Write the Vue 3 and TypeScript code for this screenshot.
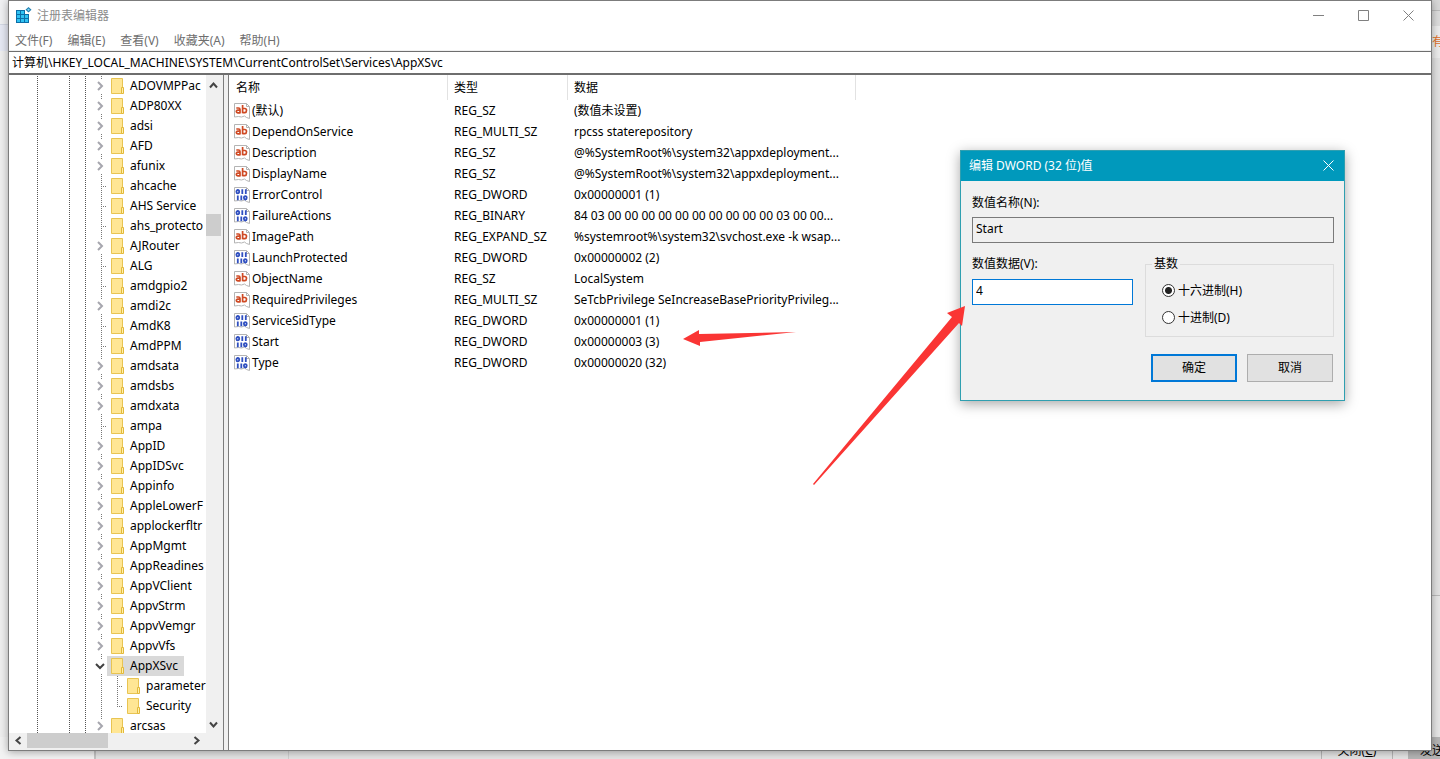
<script setup lang="ts">
import { ref } from 'vue'

type Kind = 'closed' | 'open' | 'leaf' | 'child'
interface Node { name: string; kind: Kind; last?: boolean }
interface Entry { name: string; type: string; data: string; text: boolean }

const menus = ['文件(F)', '编辑(E)', '查看(V)', '收藏夹(A)', '帮助(H)']
const leaves = ['ahcache', 'AHS Service', 'ahs_protecto', 'ALG', 'amdgpio2', 'AmdK8', 'AmdPPM', 'ampa']
const names = [
  'ADOVMPPac', 'ADP80XX', 'adsi', 'AFD', 'afunix', 'ahcache', 'AHS Service', 'ahs_protecto',
  'AJRouter', 'ALG', 'amdgpio2', 'amdi2c', 'AmdK8', 'AmdPPM', 'amdsata', 'amdsbs', 'amdxata', 'ampa',
  'AppID', 'AppIDSvc', 'Appinfo', 'AppleLowerF', 'applockerfltr', 'AppMgmt', 'AppReadines',
  'AppVClient', 'AppvStrm', 'AppvVemgr', 'AppvVfs',
]
const nodes: Node[] = [
  ...names.map((name): Node => ({ name, kind: leaves.includes(name) ? 'leaf' : 'closed' })),
  { name: 'AppXSvc', kind: 'open' },
  { name: 'parameter', kind: 'child' },
  { name: 'Security', kind: 'child', last: true },
  { name: 'arcsas', kind: 'closed' },
]

const entries: Entry[] = [
  { name: '(默认)', type: 'REG_SZ', data: '(数值未设置)', text: true },
  { name: 'DependOnService', type: 'REG_MULTI_SZ', data: 'rpcss staterepository', text: true },
  { name: 'Description', type: 'REG_SZ', data: '@%SystemRoot%\\system32\\appxdeployment...', text: true },
  { name: 'DisplayName', type: 'REG_SZ', data: '@%SystemRoot%\\system32\\appxdeployment...', text: true },
  { name: 'ErrorControl', type: 'REG_DWORD', data: '0x00000001 (1)', text: false },
  { name: 'FailureActions', type: 'REG_BINARY', data: '84 03 00 00 00 00 00 00 00 00 00 00 03 00 00...', text: false },
  { name: 'ImagePath', type: 'REG_EXPAND_SZ', data: '%systemroot%\\system32\\svchost.exe -k wsap...', text: true },
  { name: 'LaunchProtected', type: 'REG_DWORD', data: '0x00000002 (2)', text: false },
  { name: 'ObjectName', type: 'REG_SZ', data: 'LocalSystem', text: true },
  { name: 'RequiredPrivileges', type: 'REG_MULTI_SZ', data: 'SeTcbPrivilege SeIncreaseBasePriorityPrivileg...', text: true },
  { name: 'ServiceSidType', type: 'REG_DWORD', data: '0x00000001 (1)', text: false },
  { name: 'Start', type: 'REG_DWORD', data: '0x00000003 (3)', text: false },
  { name: 'Type', type: 'REG_DWORD', data: '0x00000020 (32)', text: false },
]

const path = ref('计算机\\HKEY_LOCAL_MACHINE\\SYSTEM\\CurrentControlSet\\Services\\AppXSvc')
const valueName = ref('Start')
const valueData = ref('4')
const base = ref('hex')
</script>

<template>
  <div class="desktop">
    <div class="behind">
      <div class="behind-left"></div>
      <div class="behind-right"><span class="hint">有</span></div>
      <div class="behind-bottom">
        <div class="side-pane"></div>
        <button type="button" class="back-btn">关闭(<u>C</u>)</button>
        <button type="button" class="back-btn send">发送</button>
      </div>
    </div>

    <main class="window">
      <header class="titlebar">
        <svg class="app-icon" width="16" height="16" viewBox="0 0 16 16" aria-hidden="true">
          <path d="M0 3h9v4h4v9H0z" fill="#0a6ea8" />
          <path d="M1 4h3v3H1zM5 4h3v3H5zM1 8h3v3H1zM5 8h3v3H5zM9 8h3v3H9zM1 12h3v3H1zM5 12h3v3H5zM9 12h3v3H9z" fill="#2fc2f2" />
          <path d="M12.500 0l3 2.800-3 2.800-3-2.800z" fill="#1f7fb2" />
          <path d="M12.500 1.500l1.400 1.300-1.400 1.300-1.400-1.300z" fill="#7fdcf8" />
        </svg>
        <h1>注册表编辑器</h1>
        <div class="win-controls">
          <button type="button" aria-label="最小化"><svg width="11" height="11" viewBox="0 0 11 11"><path d="M0 5.500h11" /></svg></button>
          <button type="button" aria-label="最大化"><svg width="11" height="11" viewBox="0 0 11 11"><path d="M.5.5h10v10H.5z" /></svg></button>
          <button type="button" aria-label="关闭窗口"><svg width="11" height="11" viewBox="0 0 11 11"><path d="M.5.500l10 10M10.500.500l-10 10" /></svg></button>
        </div>
      </header>

      <nav class="menubar">
        <button v-for="m in menus" :key="m" type="button">{{ m }}</button>
      </nav>

      <input v-model="path" class="address" type="text" aria-label="注册表路径" />

      <div class="panes">
        <section class="tree-pane">
          <div class="tree-row">
            <ul class="tree">
              <li v-for="n in nodes" :key="n.name" :class="[n.kind, { last: n.last }]">
                <span class="guide g1"></span><span class="guide g2"></span><span class="guide g3"></span>
                <span class="branch">
                  <svg v-if="n.kind === 'closed'" class="chev" width="10" height="10" viewBox="0 0 10 10"><path d="M3 1l4 4-4 4" /></svg>
                  <svg v-else-if="n.kind === 'open'" class="chev dark" width="10" height="10" viewBox="0 0 10 10"><path d="M1 3l4 4 4-4" /></svg>
                </span>
                <span v-if="n.kind === 'child'" class="sub"></span>
                <span class="item">
                  <svg class="folder" width="14" height="16" viewBox="0 0 14 16" aria-hidden="true">
                    <path d="M.5.500h11v15H.5z" fill="#ffe694" stroke="#e8c452" />
                    <path d="M10.500 9.500h2v6h-2z" fill="#fff0a8" stroke="#e3b93a" />
                  </svg>
                  <span>{{ n.name }}</span>
                </span>
              </li>
            </ul>
            <div class="vbar">
              <svg class="arrow" width="9" height="9" viewBox="0 0 9 9"><path d="M1 6.500l3.500-4 3.500 4" /></svg>
              <div class="vthumb"></div>
              <svg class="arrow" width="9" height="9" viewBox="0 0 9 9"><path d="M1 2.500l3.500 4 3.500-4" /></svg>
            </div>
          </div>
          <div class="hbar">
            <svg class="arrow" width="9" height="9" viewBox="0 0 9 9"><path d="M6.500 1l-4 3.500 4 3.500" /></svg>
            <div class="hthumb"></div>
            <svg class="arrow" width="9" height="9" viewBox="0 0 9 9"><path d="M2.500 1l4 3.500-4 3.500" /></svg>
          </div>
        </section>

        <section class="list-pane">
          <table>
            <thead>
              <tr><th class="c-name">名称</th><th class="c-type">类型</th><th class="c-data">数据</th></tr>
            </thead>
            <tbody>
              <tr v-for="e in entries" :key="e.name">
                <td>
                  <span class="cell">
                    <svg width="16" height="16" viewBox="0 0 16 16" aria-hidden="true">
                      <path d="M.5.500h12l3 3v12l-3-1-2-1.500-3 1-3-.5-4 .5z" fill="#fff" stroke="#b4b4b4" />
                      <path d="M12.500.500v3h3" fill="none" stroke="#b4b4b4" />
                      <g v-if="e.text" fill="none" stroke="#cf4a24" stroke-width="1.700">
                        <path d="M2.300 5h2.200q1.500 0 1.500 1.500v4M6 7.200h-2.300q-1.400 0-1.400 1.300t1.400 1.300h2.300M8.600 2v8.300M8.600 5.500h2.200q1.700 0 1.700 2t-1.700 2.200h-2.200" />
                      </g>
                      <g v-else fill="none" stroke="#2f4fc0" stroke-width="1.800">
                        <ellipse cx="3.800" cy="4.700" rx="1.400" ry="1.700" />
                        <path d="M8.300 2.300v4.700M11.800 2.300v4.700M3.800 8.500v4.700M7.300 8.500v4.700" />
                        <ellipse cx="11.300" cy="10.800" rx="1.400" ry="1.700" />
                      </g>
                    </svg>
                    {{ e.name }}
                  </span>
                </td>
                <td>{{ e.type }}</td>
                <td>{{ e.data }}</td>
              </tr>
            </tbody>
          </table>
        </section>
      </div>
    </main>

    <form class="dialog" role="dialog" aria-labelledby="dlg-title" @submit.prevent>
      <header class="dlg-head">
        <h2 id="dlg-title">编辑 DWORD (32 位)值</h2>
        <button type="button" aria-label="关闭"><svg width="11" height="11" viewBox="0 0 11 11"><path d="M.5.500l10 10M10.500.500l-10 10" /></svg></button>
      </header>
      <div class="dlg-body">
        <label for="value-name">数值名称(N):</label>
        <input id="value-name" v-model="valueName" class="box" type="text" readonly />
        <div class="dlg-cols">
          <div class="data-col">
            <label for="value-data">数值数据(V):</label>
            <input id="value-data" v-model="valueData" class="box active" type="text" />
          </div>
          <fieldset>
            <legend>基数</legend>
            <label><input v-model="base" type="radio" name="base" value="hex" />十六进制(H)</label>
            <label><input v-model="base" type="radio" name="base" value="dec" />十进制(D)</label>
          </fieldset>
        </div>
        <div class="actions">
          <button type="submit" class="primary">确定</button>
          <button type="button">取消</button>
        </div>
      </div>
    </form>

    <svg class="marks" width="1440" height="759" viewBox="0 0 1440 759" aria-hidden="true">
      <path d="M683 339l16-9v4l97-2-96 10v4z" />
      <path d="M965 306l-18 7 5 4-139 167 1 1 145-162 3 3z" />
    </svg>
  </div>
</template>

<style>
body {
  margin: 0;
}
</style>

<style scoped>
* {
  box-sizing: border-box;
}
.desktop {
  position: relative;
  display: flex;
  height: 100vh;
  padding: 0 8px 8px;
  overflow: hidden;
  background: #e4e4e4;
  font: 12px/20px "Noto Sans", "Noto Sans CJK SC", sans-serif;
  color: #000;
}
button,
input {
  font: inherit;
  color: inherit;
}
svg {
  display: block;
  flex: none;
}
.behind {
  position: absolute;
  inset: 0;
}
.behind-left {
  position: absolute;
  left: 0;
  top: 0;
  width: 8px;
  height: 100%;
  background: linear-gradient(#f0f1f3 24px, #d3d8e4 24px, #d3d8e4 25px, #e6e9f4 25px, #e6e9f4 51px, #efefef 51px);
}
.behind-right {
  position: absolute;
  right: 0;
  top: 0;
  width: 8px;
  height: 100%;
  overflow: hidden;
  padding-top: 32px;
  background: linear-gradient(#d8d8d8 10px, #bcbcbc 10px, #bcbcbc 11px, #dcdcdc 11px, #dcdcdc 26px, #ececec 26px, #ececec 58px, #e2e2e2 58px, #e2e2e2 595px, #bababa 595px, #bababa 596px, #e6e6e6 596px);
}
.hint {
  color: #e0702a;
}
.behind-bottom {
  position: absolute;
  left: 0;
  right: 0;
  bottom: 0;
  height: 22px;
  display: flex;
  gap: 15px;
  background: linear-gradient(90deg, #f3f3f3 94px, #c4c4c4 94px, #c4c4c4 96px, #e4e4e4 96px);
}
.side-pane {
  flex: 1;
  margin-left: 288px;
  margin-right: -15px;
  border-left: 1px solid #cfcfcf;
}
.back-btn {
  width: 72px;
  height: 28px;
  padding: 0;
  border: 1px solid #b5b5b5;
  border-width: 0 1px;
  background: #e4e4e4;
  white-space: nowrap;
}
.send {
  width: 32px;
  padding-left: 12px;
  border: 0;
  background: #b5b5b5;
  text-align: left;
}
.window {
  position: relative;
  flex: 1;
  min-width: 0;
  display: flex;
  flex-direction: column;
  border: 1px solid #7c7c7c;
  background: #fff;
  box-shadow: 0 1px 8px rgba(0, 0, 0, 0.35);
}
.titlebar {
  display: flex;
  align-items: center;
  height: 30px;
  flex: none;
  padding-left: 7px;
}
.app-icon {
  margin-bottom: 2px;
}
h1,
h2 {
  margin: 0;
  font-size: 12px;
  font-weight: 400;
}
h1 {
  flex: 1;
  margin-left: 5px;
  color: #8c8c8c;
}
.win-controls {
  display: flex;
  align-self: flex-start;
}
.win-controls button {
  display: flex;
  align-items: center;
  justify-content: center;
  width: 45px;
  height: 29px;
  padding: 0;
  border: 0;
  background: none;
}
.win-controls path {
  fill: none;
  stroke: #808080;
}
.menubar {
  display: flex;
  height: 20px;
  flex: none;
  gap: 15px;
  padding-left: 6px;
  border-bottom: 1px solid #f0f0f0;
}
.menubar button {
  padding: 0;
  border: 0;
  background: none;
  color: #6e6e6e;
  line-height: 20px;
}
.address {
  height: 24px;
  flex: none;
  padding: 0 3px 2px;
  border: 1px solid #6e6e6e;
  border-width: 1px 0 2px;
  background: #fff;
  outline: 0;
}
.panes {
  display: flex;
  flex: 1;
  min-height: 0;
  background: #f0f0f0;
}
.tree-pane {
  width: 215px;
  flex: none;
  display: flex;
  flex-direction: column;
  padding-right: 2px;
  border-right: 1px solid #7c7c7c;
  background: #f0f0f0;
}
.tree-row {
  display: flex;
  flex: 1;
  min-height: 0;
}
.tree {
  flex: 1;
  min-width: 0;
  margin: 0;
  padding: 1px 0 0;
  overflow: hidden;
  list-style: none;
  background: #fff;
}
li {
  display: flex;
  height: 20px;
}
.guide {
  flex: none;
  background: repeating-linear-gradient(#555 0 1px, #fff 1px 2px) right 0 / 1px 100% no-repeat;
}
.g1 {
  width: 29px;
}
.g2 {
  width: 32px;
}
.g3 {
  width: 16px;
}
.branch {
  display: flex;
  width: 21px;
  flex: none;
  align-items: center;
  padding-left: 9px;
  background: repeating-linear-gradient(#777 0 1px, #fff 1px 2px) 15px 0 / 1px 100% no-repeat;
}
.leaf .branch {
  background:
    repeating-linear-gradient(#777 0 1px, #fff 1px 2px) 15px 0 / 1px 100% no-repeat,
    repeating-linear-gradient(90deg, #777 0 1px, #fff 1px 2px) 15px 10px / 6px 1px no-repeat;
}
.chev {
  height: 14px;
  padding: 2px 0;
  background: #fff;
}
.chev path {
  fill: none;
  stroke: #a6a6ae;
  stroke-width: 2;
}
.chev.dark path {
  stroke: #404040;
}
.sub {
  width: 16px;
  flex: none;
  background:
    repeating-linear-gradient(#777 0 1px, #fff 1px 2px) 10px 0 / 1px 100% no-repeat,
    repeating-linear-gradient(90deg, #777 0 1px, #fff 1px 2px) 10px 10px / 6px 1px no-repeat;
}
.last .sub {
  background-size: 1px 10px, 6px 1px;
}
.item {
  display: flex;
  align-items: center;
  gap: 5px;
  padding: 0 4px;
  white-space: nowrap;
}
.open .item {
  padding-right: 6px;
  background: #d9d9d9;
}
.vbar {
  display: flex;
  flex-direction: column;
  align-items: center;
  width: 15px;
  flex: none;
  padding: 6px 0 4px;
}
.vthumb {
  width: 15px;
  height: 22px;
  margin: 124px 0 auto;
  background: #cdcdcd;
}
.arrow path {
  fill: none;
  stroke: #444;
  stroke-width: 2;
}
.hbar {
  display: flex;
  align-items: center;
  height: 17px;
  flex: none;
  padding: 0 20px 2px 5px;
}
.hthumb {
  width: 81px;
  height: 15px;
  margin: 0 auto 0 4px;
  background: #cdcdcd;
}
.list-pane {
  flex: 1;
  min-width: 0;
  margin-left: 4px;
  border-left: 1px solid #7c7c7c;
  background: #fff;
}
table {
  width: 627px;
  table-layout: fixed;
  border-collapse: separate;
  border-spacing: 0;
}
th {
  height: 25px;
  padding: 0 6px;
  border-right: 1px solid #e2e2e2;
  font-weight: 400;
  text-align: left;
}
.c-name {
  width: 219px;
  padding-left: 7px;
}
.c-type {
  width: 120px;
}
td {
  height: 21px;
  padding: 0 6px;
  white-space: nowrap;
}
td:first-child {
  padding-left: 5px;
}
.cell {
  display: flex;
  align-items: center;
  gap: 2px;
}
.dialog {
  position: absolute;
  left: 960px;
  top: 150px;
  width: 385px;
  border: 1px solid #2f9fb0;
  background: #f0f0f0;
  box-shadow: 0 3px 12px rgba(0, 0, 0, 0.35);
}
.dlg-head {
  display: flex;
  align-items: center;
  justify-content: space-between;
  height: 30px;
  padding: 0 10px 0 8px;
  background: #0099bc;
  color: #fff;
}
.dlg-head button {
  padding: 0 0 2px;
  border: 0;
  background: none;
}
.dlg-head path {
  fill: none;
  stroke: #fff;
}
.dlg-body {
  padding: 12px 10px 18px 11px;
}
.dlg-body label {
  display: block;
}
.box {
  display: block;
  width: 100%;
  height: 26px;
  margin-top: 4px;
  padding: 0 3px 3px;
  border: 1px solid #7a7a7a;
  background: #f0f0f0;
  outline: 0;
}
.box.active {
  margin-top: 5px;
  border-color: #0078d7;
  background: #fff;
}
.dlg-cols {
  display: flex;
  gap: 12px;
  margin-top: 11px;
}
.data-col {
  width: 161px;
}
fieldset {
  flex: 1;
  min-width: 0;
  height: 83px;
  margin: 0;
  padding: 3px 16px 0;
  border: 1px solid #dcdcdc;
}
legend {
  margin-left: -10px;
  padding: 0 2px;
}
.dlg-body fieldset label {
  display: flex;
  align-items: center;
  gap: 3px;
  height: 27px;
}
input[type="radio"] {
  appearance: none;
  flex: none;
  width: 13px;
  height: 13px;
  margin: 0;
  border: 1px solid #333;
  border-radius: 50%;
  background: #fff;
}
input[type="radio"]:checked {
  background: radial-gradient(circle, #222 3px, #fff 4px);
}
.actions {
  display: flex;
  justify-content: flex-end;
  gap: 10px;
  margin-top: 17px;
  padding-right: 1px;
}
.actions button {
  width: 86px;
  height: 28px;
  padding: 0;
  border: 1px solid #adadad;
  background: #e1e1e1;
}
.actions .primary {
  border: 2px solid #0078d7;
}
.marks {
  position: absolute;
  left: 0;
  top: 0;
  fill: #fa3534;
  pointer-events: none;
}
</style>
